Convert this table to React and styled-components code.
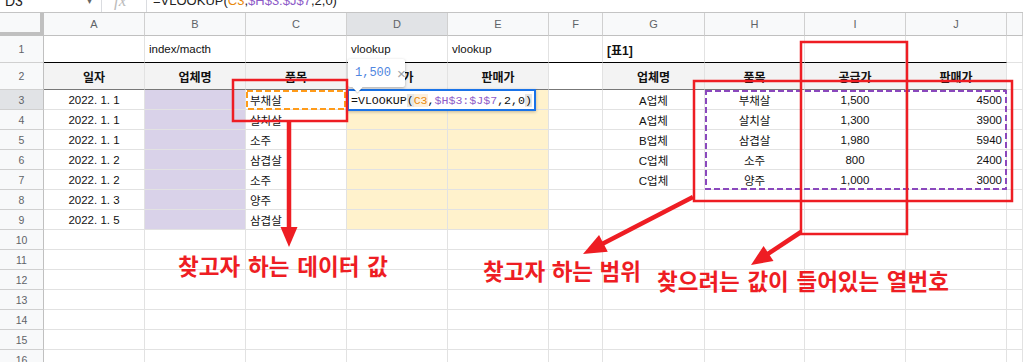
import React from "react";
import styled, { createGlobalStyle } from "styled-components";

const GlobalStyle = createGlobalStyle`
  html, body { margin: 0; padding: 0; background: #fff; overflow: hidden; }
  body { font-family: "Liberation Sans", "Noto Sans CJK KR", sans-serif; color: #222; }
`;

const LAV = "#d9d2e9";
const YEL = "#fff2cc";
const HEAD = "#f3f3f3";
const RED = "#ee1d23";

const COLS = ["A", "B", "C", "D", "E", "F", "G", "H", "I", "J", ""];
const headers = ["일자", "업체명", "품목", "공급가", "판매가", "", "업체명", "품목", "공급가", "판매가"];
const dates = ["2022. 1. 1", "2022. 1. 1", "2022. 1. 1", "2022. 1. 2", "2022. 1. 2", "2022. 1. 3", "2022. 1. 5"];
const items = ["부채살", "살치살", "소주", "삼겹살", "소주", "양주", "삼겹살"];
const table = [
  ["A업체", "부채살", "1,500", "4500"],
  ["A업체", "살치살", "1,300", "3900"],
  ["B업체", "삼겹살", "1,980", "5940"],
  ["C업체", "소주", "800", "2400"],
  ["C업체", "양주", "1,000", "3000"],
];

const notes = [
  { x: 178, y: 252, w: 210, text: "찾고자 하는 데이터 값" },
  { x: 483, y: 257, w: 158, text: "찾고자 하는 범위" },
  { x: 657, y: 267, w: 292, text: "찾으려는 값이 들어있는 열번호" },
];

// 한 행의 셀 정보
function rowCells(r) {
  const cells = Array.from({ length: 11 }, () => ({}));
  if (r === 1) {
    cells[1] = { text: "index/macth" };
    cells[3] = { text: "vlookup" };
    cells[4] = { text: "vlookup" };
    cells[6] = { text: "[표1]", bold: true };
    for (let i = 0; i < 10; i++) cells[i].line = "#000";
  } else if (r === 2) {
    headers.forEach((h, i) => {
      cells[i] = { text: h, bold: true, align: "center", fill: i === 5 ? undefined : HEAD, line: "#777" };
    });
  } else if (r >= 3 && r <= 9) {
    const k = r - 3;
    cells[0] = { text: dates[k], align: "center" };
    cells[1] = { fill: LAV };
    cells[2] = { text: items[k] };
    cells[3] = { fill: YEL };
    cells[4] = { fill: YEL };
    if (k < 5) {
      const t = table[k];
      cells[6] = { text: t[0], align: "center" };
      cells[7] = { text: t[1], align: "center" };
      cells[8] = { text: t[2], align: "center" };
      cells[9] = { text: t[3], align: "right" };
    }
  }
  return cells;
}

const ROWS = Array.from({ length: 16 }, (_, i) => i + 1);

// 화살표 (선 + 삼각형 머리)
function Arrow({ x1, y1, x2, y2, len = 20, w = 17, sw = 4.5 }) {
  const dx = x2 - x1, dy = y2 - y1;
  const d = Math.hypot(dx, dy);
  const ux = dx / d, uy = dy / d;
  const bx = x2 - ux * len, by = y2 - uy * len;
  const px = -uy * w / 2, py = ux * w / 2;
  return (
    <g fill={RED} stroke={RED}>
      <line x1={x1} y1={y1} x2={bx + ux * 2} y2={by + uy * 2} strokeWidth={sw} />
      <polygon stroke="none" points={`${x2},${y2} ${bx + px},${by + py} ${bx - px},${by - py}`} />
    </g>
  );
}

const App = () => {
  return (
    <Page>
      <GlobalStyle />
      <FormulaBar>
        <NameBox>D3</NameBox>
        <Caret>▾</Caret>
        <Sep />
        <Fx>fx</Fx>
        <Sep />
        <BarFormula>
          =VLOOKUP(<Ref $c="#e8890c">C3</Ref>,<Ref $c="#8e5cc8">$H$3:$J$7</Ref>,2,0)
        </BarFormula>
      </FormulaBar>

      <Grid>
        <Corner />
        {COLS.map((c) => (
          <ColHead key={c || "k"} $active={c === "D"}>{c}</ColHead>
        ))}
        {ROWS.map((r) => (
          <React.Fragment key={r}>
            <RowHead $active={r === 3}>{r}</RowHead>
            {rowCells(r).map((cell, i) => (
              <Cell key={i} $fill={cell.fill} $align={cell.align} $bold={cell.bold} $line={cell.line}>
                {cell.text}
              </Cell>
            ))}
          </React.Fragment>
        ))}
      </Grid>

      <Editor>
        =VLOOKUP<Paren>(</Paren>
        <EdRef $c="#e8890c" $bg="#fdf0dd">C3</EdRef>,<EdRef $c="#8e5cc8">$H$3:$J$7</EdRef>,2,0<Paren>)</Paren>
      </Editor>

      <Tip>
        <TipValue>1,500</TipValue>
        <TipClose>×</TipClose>
      </Tip>

      <Marks viewBox="0 0 1023 362">
        <rect x="247" y="91" width="98" height="18" fill="none" stroke="#ff9b1a" strokeWidth="2" strokeDasharray="6 3" />
        <rect x="706" y="91" width="300" height="98" fill="none" stroke="#8a48bd" strokeWidth="2" strokeDasharray="6 3" />
        <rect x="233" y="80" width="114" height="41" fill="none" stroke={RED} strokeWidth="2.5" />
        <rect x="694" y="81" width="318" height="120" fill="none" stroke={RED} strokeWidth="2.5" />
        <rect x="801" y="42" width="106" height="192" fill="none" stroke={RED} strokeWidth="2.5" />
        <Arrow x1={289} y1={121} x2={289} y2={247} len={20} w={17} />
        <Arrow x1={693} y1={197} x2={583} y2={254} len={23} w={19} />
        <Arrow x1={801} y1={232} x2={751} y2={265} len={21} w={18} />
      </Marks>

      {notes.map((n) => (
        <Note key={n.text} $x={n.x} $y={n.y} $w={n.w}>
          {n.text.split(" ").map((word, i) => (
            <span key={i}>{word}</span>
          ))}
        </Note>
      ))}
    </Page>
  );
};

export default App;

const Page = styled.div`
  position: relative;
  width: 1023px;
  height: 362px;
  overflow: hidden;
  background: #fff;
`;

const FormulaBar = styled.div`
  height: 12px;
  border-bottom: 1px solid #c4c4c4;
  display: flex;
  align-items: flex-end;
  overflow: hidden;
  font-size: 14px;
  line-height: 14px;
  color: #222;
  & > * { margin-bottom: 4px; }
`;

const NameBox = styled.div`
  width: 82px;
  padding-left: 5px;
`;

const Caret = styled.div`
  width: 14px;
  font-size: 10px;
  color: #666;
`;

const Sep = styled.div`
  align-self: stretch;
  width: 1px;
  margin: 0 !important;
  background: #dadce0;
`;

const Fx = styled.div`
  width: 44px;
  padding-left: 12px;
  box-sizing: border-box;
  font-family: "Liberation Serif", serif;
  font-style: italic;
  color: #bbb;
  font-size: 17px;
`;

const BarFormula = styled.div`
  padding-left: 6px;
  white-space: nowrap;
  font-size: 13px;
`;

const Ref = styled.span`
  color: ${(p) => p.$c};
`;

const Grid = styled.div`
  display: grid;
  grid-template-columns: 44px 101px 101px 101px 101px 101px 54px 102px 100px 101px 101px 1fr;
  grid-template-rows: 23px 27px 27px repeat(14, 20px);
  font-size: 11.5px;
`;

const Corner = styled.div`
  background: #f8f9fa;
  border-right: 4px solid #c0c0c0;
  border-bottom: 4px solid #c0c0c0;
  box-sizing: border-box;
`;

const ColHead = styled.div`
  background: ${(p) => (p.$active ? "#e1e3e6" : "#f8f9fa")};
  border-right: 1px solid #d0d0d0;
  border-bottom: 1px solid #c0c0c0;
  box-sizing: border-box;
  display: flex;
  align-items: center;
  justify-content: center;
  font-size: 11px;
  color: #5f6368;
`;

const RowHead = styled.div`
  background: ${(p) => (p.$active ? "#e1e3e6" : "#f8f9fa")};
  border-right: 1px solid #c0c0c0;
  border-bottom: 1px solid #d0d0d0;
  box-sizing: border-box;
  display: flex;
  align-items: center;
  justify-content: center;
  font-size: 10.5px;
  color: #5f6368;
`;

const Cell = styled.div`
  background: ${(p) => p.$fill || "#fff"};
  border-right: 1px solid #e2e2e2;
  border-bottom: 1px solid ${(p) => p.$line || "#e2e2e2"};
  box-sizing: border-box;
  display: flex;
  align-items: center;
  justify-content: ${(p) =>
    p.$align === "center" ? "center" : p.$align === "right" ? "flex-end" : "flex-start"};
  padding: 0 4px;
  white-space: nowrap;
  font-weight: ${(p) => (p.$bold ? 700 : 400)};
  font-size: ${(p) => (p.$bold ? "12px" : "11.5px")};
  color: #111;
`;

const Editor = styled.div`
  position: absolute;
  left: 347px;
  top: 89px;
  width: 189px;
  height: 22px;
  box-sizing: border-box;
  border: 2px solid #1a73e8;
  background: #fff;
  box-shadow: 0 1px 3px rgba(0, 0, 0, 0.25);
  display: flex;
  align-items: center;
  padding-left: 2px;
  font-family: "Liberation Mono", monospace;
  font-size: 11.6px;
  color: #111;
  white-space: nowrap;
`;

const Paren = styled.span`
  background: #e6e6e6;
`;

const EdRef = styled.span`
  color: ${(p) => p.$c};
  background: ${(p) => p.$bg || "transparent"};
`;

const Tip = styled.div`
  position: absolute;
  left: 348px;
  top: 59px;
  width: 57px;
  height: 28px;
  box-sizing: border-box;
  background: #fff;
  border-radius: 2px;
  box-shadow: 0 1px 3px rgba(0, 0, 0, 0.3);
  display: flex;
  align-items: center;
  gap: 6px;
  padding-left: 7px;
  font-family: "Liberation Mono", monospace;

  &::after {
    content: "";
    position: absolute;
    left: 6px;
    bottom: -4px;
    width: 7px;
    height: 7px;
    background: #fff;
    transform: rotate(45deg);
    box-shadow: 1px 1px 1px rgba(0, 0, 0, 0.15);
  }
`;

const TipValue = styled.span`
  font-size: 12px;
  color: #4f86e0;
`;

const TipClose = styled.span`
  font-family: "Liberation Sans", sans-serif;
  font-size: 15px;
  color: #a0a4a8;
`;

const Marks = styled.svg`
  position: absolute;
  left: 0;
  top: 0;
  width: 1023px;
  height: 362px;
  pointer-events: none;
`;

const Note = styled.div`
  position: absolute;
  left: ${(p) => p.$x}px;
  top: ${(p) => p.$y}px;
  width: ${(p) => p.$w}px;
  display: flex;
  justify-content: space-between;
  font-family: "Noto Sans CJK KR", sans-serif;
  font-weight: 700;
  font-size: 22.5px;
  line-height: 26px;
  color: ${RED};
  white-space: nowrap;
`;
